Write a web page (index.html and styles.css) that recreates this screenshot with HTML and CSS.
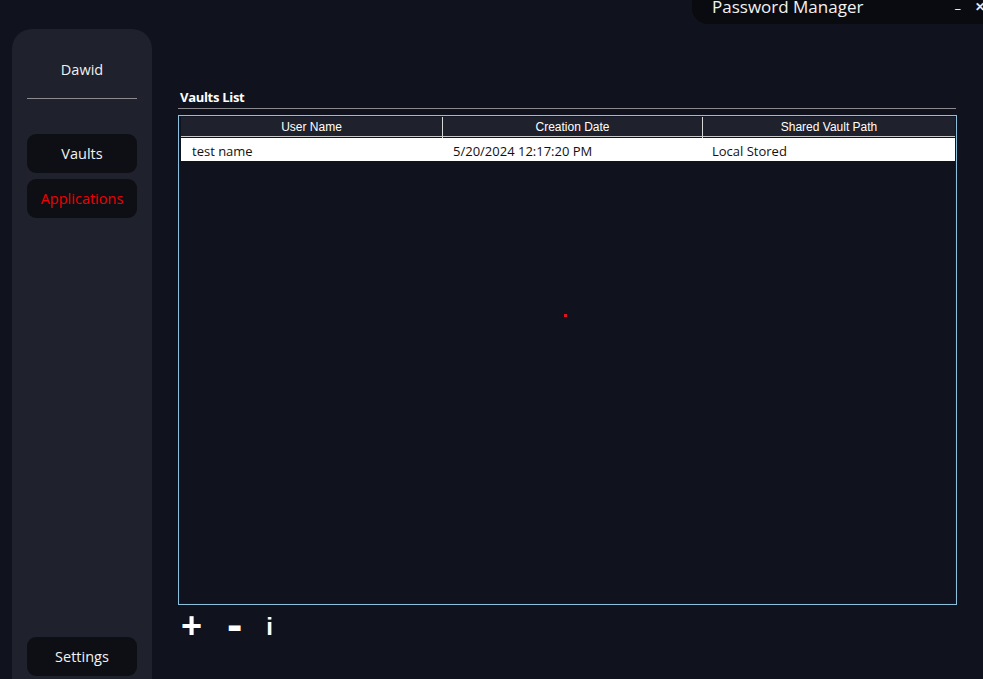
FILE: index.html
```html
<!DOCTYPE html>
<html>
<head>
<meta charset="utf-8">
<link rel="stylesheet" href="styles.css">
</head>
<body>
<div class="topbar">
  <div class="titlebar">
    <span class="title">Password Manager</span>
    <span class="win-btn min">–</span>
    <span class="win-btn close">✕</span>
  </div>
</div>
<div class="app">
  <aside class="sidebar">
    <div class="user">Dawid</div>
    <div class="sep"></div>
    <nav class="nav">
      <button class="nav-btn">Vaults</button>
      <button class="nav-btn active">Applications</button>
    </nav>
    <button class="nav-btn settings">Settings</button>
  </aside>
  <main class="main">
    <h2 class="section-title">Vaults List</h2>
    <div class="rule"></div>
    <div class="table">
      <div class="thead">
        <div class="th">User Name</div>
        <div class="th">Creation Date</div>
        <div class="th last">Shared Vault Path</div>
      </div>
      <div class="tr">
        <div class="td c1">test name</div>
        <div class="td c2">5/20/2024 12:17:20 PM</div>
        <div class="td c3">Local Stored</div>
      </div>
      <span class="dot"></span>
    </div>
    <div class="actions">
      <span class="act plus">+</span>
      <span class="act minus">-</span>
      <span class="act info">i</span>
    </div>
  </main>
</div>
</body>
</html>
```
FILE: styles.css
```css
html, body {
  margin: 0;
  padding: 0;
  height: 679px;
  overflow: hidden;
}
body {
  background: #10121d;
  font-family: "Open Sans", "Noto Sans", sans-serif;
  color: #fff;
}
.topbar {
  display: flex;
  justify-content: flex-end;
  height: 24px;
}
.titlebar {
  width: 291px;
  height: 24px;
  background: #0a0b10;
  border-bottom-left-radius: 16px;
  display: flex;
  align-items: flex-start;
}
.title {
  font-family: "Open Sans", "Noto Sans", sans-serif;
  font-size: 17px;
  line-height: 18px;
  margin-left: 20px;
  margin-top: -2px;
  color: #f2f2f2;
}
.win-btn {
  font-size: 13px;
  line-height: 14px;
  color: #e8e8e8;
}
.min {
  margin-left: auto;
  margin-right: 14px;
  margin-top: 1px;
}
.close {
  margin-right: -2px;
  font-weight: bold;
  font-size: 12px;
}
.app {
  display: flex;
}
.sidebar {
  margin-top: 5px;
  margin-left: 12px;
  width: 140px;
  height: 650px;
  background: #1f212c;
  border-radius: 20px 20px 0 0;
  display: flex;
  flex-direction: column;
  align-items: center;
  box-sizing: border-box;
  padding-bottom: 3px;
}
.user {
  margin-top: 31px;
  font-size: 14.5px;
  line-height: 20px;
  color: #f0f0f0;
}
.sep {
  margin-top: 18px;
  width: 110px;
  height: 1px;
  background: #8b8b8f;
}
.nav {
  margin-top: 35px;
  display: flex;
  flex-direction: column;
  gap: 6px;
}
.nav-btn {
  width: 110px;
  height: 39px;
  border: none;
  border-radius: 9px;
  background: #0e0f15;
  color: #f2f2f2;
  font-family: "Open Sans", "Noto Sans", sans-serif;
  font-size: 14.5px;
  padding: 0;
}
.nav-btn.active {
  color: #f00000;
}
.settings {
  margin-top: auto;
}
.main {
  margin-left: 26px;
  width: 779px;
  padding-top: 64px;
}
.section-title {
  margin: 0 0 0 2px;
  font-family: "Open Sans", "Noto Sans", sans-serif;
  font-weight: 700;
  font-size: 13px;
  line-height: 18px;
  letter-spacing: -0.3px;
}
.rule {
  margin-top: 2px;
  width: 778px;
  height: 1px;
  background: #8a8a8e;
}
.table {
  margin-top: 6px;
  height: 490px;
  box-sizing: border-box;
  border: 1px solid #8cc0de;
  box-shadow: inset 0 0 0 1px #141826;
  padding: 1px 1px 1px 2px;
  position: relative;
}
.thead {
  display: grid;
  grid-template-columns: 262px 260px 1fr;
  height: 20px;
  background: #1f212c;
  border-bottom: 1px solid #c8c8c8;
  box-sizing: border-box;
}
.th {
  font-family: "Liberation Sans", Arial, sans-serif;
  font-size: 12px;
  line-height: 21px;
  text-align: center;
  color: #fff;
  border-right: 1px solid #d6d6d6;
}
.th.last {
  border-right: none;
}
.tr {
  display: grid;
  grid-template-columns: 262px 260px 1fr;
  height: 23px;
  margin-top: 1px;
  background: #fff;
}
.td {
  font-size: 13px;
  line-height: 23px;
  padding-top: 2px;
  color: #111;
}
.c1 { padding-left: 11px; }
.c2 { padding-left: 10px; }
.c3 { padding-left: 9px; }
.dot {
  position: absolute;
  left: 385px;
  top: 198px;
  width: 3px;
  height: 3px;
  background: #e0141c;
}
.actions {
  display: flex;
  align-items: center;
  height: 42px;
  padding-left: 4px;
}
.act {
  font-family: "Liberation Sans", Arial, sans-serif;
  font-weight: 700;
  color: #fff;
}
.plus {
  font-size: 36px;
  line-height: 36px;
  margin-left: -1px;
}
.minus {
  font-size: 46px;
  line-height: 40px;
  margin-left: 25px;
  margin-top: -4px;
}
.info {
  font-size: 24px;
  line-height: 24px;
  margin-left: 24px;
  margin-top: 2px;
}
```
